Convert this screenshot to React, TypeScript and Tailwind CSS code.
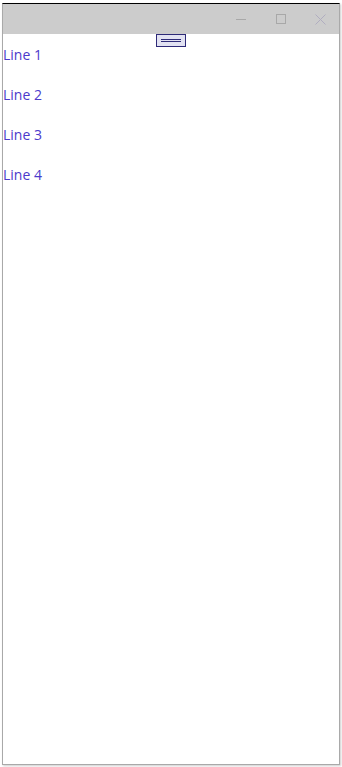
export default function App() {
  return (
    <div className="w-[342px] h-[767px] bg-white pt-[3px] pl-[2px] pr-[2px] pb-[2px]" style={{ fontFamily: '"Open Sans", sans-serif' }}>
      <div className="w-[338px] h-[762px] flex flex-col border-x border-b border-[#a9a9a9] border-t border-t-black shadow-[1px_1px_2px_rgba(0,0,0,0.2)]">
        {/* Title bar */}
        <div className="h-[30px] bg-[#cccccc] flex items-center justify-end shrink-0">
          <div className="w-10 flex justify-center">
            <div className="w-[10px] h-px bg-[#a8a8a8]" />
          </div>
          <div className="w-10 flex justify-center">
            <div className="w-[10px] h-[10px] border border-[#a8a8a8]" />
          </div>
          <div className="w-[38px] flex justify-center">
            <svg width="11" height="11" viewBox="0 0 11 11">
              <path d="M0.5 0.5 L10.5 10.5 M10.5 0.5 L0.5 10.5" stroke="#b0adc0" strokeWidth="1" />
            </svg>
          </div>
        </div>

        {/* Content */}
        <div className="relative flex-1 bg-white">
          <div className="absolute left-[153px] top-0 w-[30px] h-[13px] bg-[#e2e2f2] border border-[#2e2a78] flex flex-col items-center justify-center gap-[1px]">
            <div className="w-[20px] h-px bg-[#2e2a78]" />
            <div className="w-[20px] h-px bg-[#2e2a78]" />
          </div>
          <div className="flex flex-col pt-[11px] text-[14px] text-[#4b3acb] leading-[20px]">
            <div className="h-10">Line 1</div>
            <div className="h-10">Line 2</div>
            <div className="h-10">Line 3</div>
            <div className="h-10">Line 4</div>
          </div>
        </div>
      </div>
    </div>
  );
}
